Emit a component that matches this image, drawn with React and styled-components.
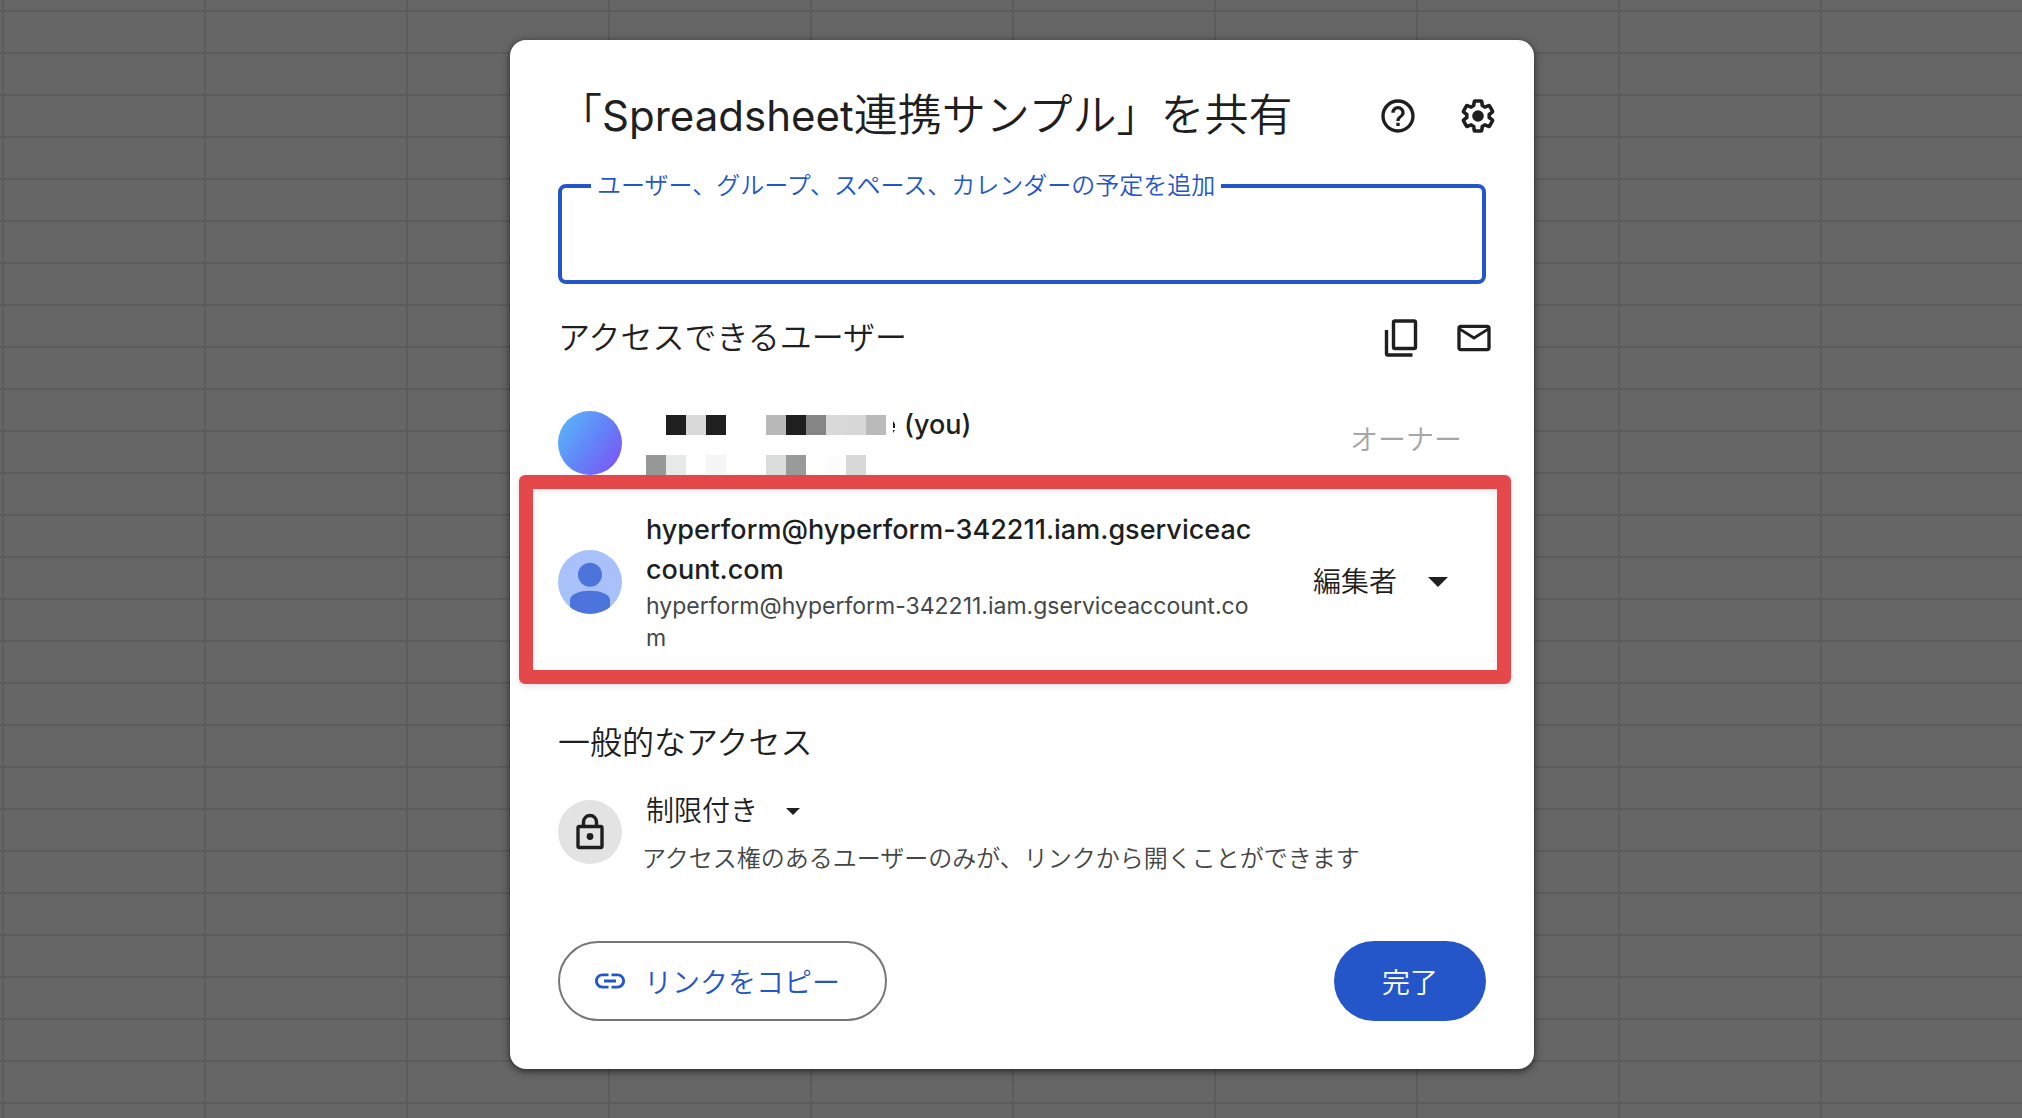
import React from 'react';
import styled, { createGlobalStyle } from 'styled-components';
import { MdHelpOutline, MdOutlineEmail, MdLink } from 'react-icons/md';

const blue = '#2456ca';
const ink = '#1f1f1f';
const muted = '#444746';

const GlobalStyle = createGlobalStyle`
  *, *::before, *::after { box-sizing: border-box; }
  body {
    margin: 0;
    color: ${ink};
    font-family: Inter, "Noto Sans CJK JP", sans-serif;
    font-weight: 350;
  }
  h1, h2, p { margin: 0; font-weight: inherit; }
`;

/* Dimmed spreadsheet grid behind the dialog */
const Backdrop = styled.div`
  min-height: 100vh;
  display: flex;
  justify-content: center;
  align-items: flex-start;
  padding: 40px 0 50px 22px;
  background-color: #666;
  background-image:
    linear-gradient(#5c5c5c 2px, transparent 2px),
    linear-gradient(90deg, #5c5c5c 2px, transparent 2px);
  background-size: 100% 42px, 202px 100%;
  background-position: 0 10px, 2px 0;
`;

const Dialog = styled.main`
  width: 100%;
  max-width: 1024px;
  padding: 44px 0 48px;
  border-radius: 16px;
  background: #fff;
  box-shadow: 0 2px 6px rgba(0, 0, 0, 0.5), 0 2px 12px rgba(0, 0, 0, 0.2);
`;

const Header = styled.header`
  display: flex;
  align-items: flex-start;
  justify-content: space-between;
  height: 64px;
  padding: 0 36px 0 48px;
`;

const Title = styled.h1`
  font-size: 44px;
  line-height: 62px;
`;

const Latin = styled.span`
  font-size: 42px;
  font-weight: 400;
`;

const Actions = styled.div`
  display: flex;
  align-self: center;
  gap: ${(p) => p.$gap}px;
`;

const IconButton = styled.button`
  display: flex;
  padding: 0;
  border: 0;
  background: none;
  color: ${ink};
  cursor: pointer;

  svg { width: 40px; height: 40px; }
`;

const Field = styled.fieldset`
  margin: 23px 48px 0;
  padding: 0;
  border: 4px solid ${blue};
  border-radius: 8px;
`;

const Legend = styled.legend`
  margin-left: 29px;
  padding: 0 6px;
  color: ${blue};
  font-size: 24px;
  line-height: 30px;
`;

const TextInput = styled.input`
  display: block;
  width: 100%;
  height: 79px;
  padding: 0 28px;
  border: 0;
  outline: 0;
  background: none;
  color: ${ink};
  font: inherit;
  font-size: 28px;
`;

const SectionHeader = styled.div`
  display: flex;
  align-items: center;
  justify-content: space-between;
  margin-top: ${(p) => p.$top}px;
  padding: 0 40px 0 48px;
`;

const SectionTitle = styled.h2`
  font-size: 32px;
  line-height: 40px;
`;

const UserRow = styled.div`
  display: flex;
  align-items: flex-end;
  gap: 24px;
  margin-top: 47px;
  padding: 0 72px 0 48px;
`;

const HighlightedRow = styled.div`
  display: flex;
  align-items: center;
  gap: 24px;
  margin: 0 23px 0 9px;
  padding: 21px 49px 16px 25px;
  border: 14px solid #e4484a;
  border-radius: 6px;
  box-shadow: 0 2px 6px rgba(0, 0, 0, 0.12), inset 0 2px 6px rgba(0, 0, 0, 0.1);
`;

const Avatar = styled.div`
  flex: none;
  display: flex;
  align-items: center;
  justify-content: center;
  width: 64px;
  height: 64px;
  border-radius: 50%;
  overflow: hidden;
  background: ${(p) => p.$fill};
`;

const Identity = styled.div`
  flex: 0 1 612px;
  min-width: 0;
  word-break: break-all;
`;

const Name = styled.p`
  display: flex;
  align-items: center;
  font-size: 27px;
  font-weight: 500;
  line-height: 40px;
`;

const Email = styled.p`
  color: ${muted};
  font-size: 23px;
  font-weight: 400;
  line-height: 32px;
`;

const Mosaic = styled.span`
  display: flex;
  margin-top: ${(p) => p.$top || 0}px;
`;

const Tile = styled.span`
  width: 20px;
  height: 20px;
  background: ${(p) => p.$tone};
`;

const Remnant = styled.svg`
  margin: 0 8px 0 7px;
`;

const Owner = styled.p`
  align-self: center;
  margin-left: auto;
  color: #a6a6a6;
  font-size: 28px;
  line-height: 40px;
`;

const SelectBox = styled.div`
  display: inline-grid;
  align-items: center;
  margin-left: ${(p) => (p.$end ? 'auto' : '4px')};

  select, svg { grid-area: 1 / 1; }
  svg { justify-self: end; pointer-events: none; }
`;

const Select = styled.select`
  appearance: none;
  height: 40px;
  padding: 0 ${(p) => p.$gap}px 0 0;
  border: 0;
  background: none;
  color: ${ink};
  font: inherit;
  font-size: 28px;
  line-height: 40px;
  cursor: pointer;
`;

const GeneralRow = styled.div`
  display: flex;
  align-items: center;
  gap: 20px;
  margin-top: 28px;
  padding: 0 48px;
`;

const GeneralText = styled.div`
  display: flex;
  flex-direction: column;
  align-items: flex-start;
  gap: 14px;
`;

const Description = styled.p`
  color: ${muted};
  font-size: 24px;
  line-height: 28px;
`;

const Footer = styled.footer`
  display: flex;
  justify-content: space-between;
  margin-top: 68px;
  padding: 0 48px;
`;

const PillButton = styled.button`
  display: flex;
  align-items: center;
  gap: 16px;
  height: 80px;
  padding: ${(p) => (p.$primary ? '0 48px' : '0 45px 0 32px')};
  border: ${(p) => (p.$primary ? '0' : '2px solid #747775')};
  border-radius: 40px;
  background: ${(p) => (p.$primary ? blue : '#fff')};
  color: ${(p) => (p.$primary ? '#fff' : blue)};
  font: inherit;
  font-size: 28px;
  cursor: pointer;

  svg { width: 36px; height: 36px; }
`;

const GearIcon = () => (
  <svg viewBox="0 0 24 24" aria-hidden="true">
    <g transform="translate(1.2 1.2) scale(.9)">
      <path
        fill="none"
        stroke="currentColor"
        strokeWidth="2.4"
        strokeLinejoin="round"
        d="M19.43 12.98c.04-.32.07-.64.07-.98 0-.34-.03-.66-.07-.98l2.11-1.65c.19-.15.24-.42.12-.64l-2-3.46a.5.5 0 0 0-.61-.22l-2.49 1c-.52-.4-1.08-.73-1.69-.98l-.38-2.65A.488.488 0 0 0 14 2h-4c-.25 0-.46.18-.49.42l-.38 2.65c-.61.25-1.17.59-1.69.98l-2.49-1a.5.5 0 0 0-.61.22l-2 3.46c-.13.22-.07.49.12.64l2.11 1.65c-.04.32-.07.65-.07.98 0 .33.03.66.07.98l-2.11 1.65c-.19.15-.24.42-.12.64l2 3.46a.5.5 0 0 0 .61.22l2.49-1c.52.4 1.08.73 1.69.98l.38 2.65c.03.24.24.42.49.42h4c.25 0 .46-.18.49-.42l.38-2.65c.61-.25 1.17-.59 1.69-.98l2.49 1a.5.5 0 0 0 .61-.22l2-3.46c.12-.22.07-.49-.12-.64z"
      />
    </g>
    <circle cx="12" cy="12" r="3.5" fill="currentColor" />
  </svg>
);

const CopyIcon = () => (
  <svg viewBox="0 0 40 40" fill="none" stroke="currentColor" strokeWidth="3.4" aria-hidden="true">
    <rect x="12.5" y="3" width="22" height="27.5" rx="1.5" />
    <path d="M5.5 12v23.5q0 1.5 1.5 1.5h24.5" />
  </svg>
);

const LockIcon = () => (
  <svg width="40" height="40" viewBox="0 0 40 40" fill="none" stroke={ink} strokeWidth="3.4" aria-hidden="true">
    <rect x="8" y="14.5" width="24" height="21" rx="1.5" />
    <path d="M13.5 14.5V10a6.5 6.5 0 0 1 13 0v4.5" />
    <circle cx="20" cy="24.5" r="3.4" fill={ink} stroke="none" />
  </svg>
);

const PersonIcon = () => (
  <svg width="64" height="64" viewBox="0 0 64 64" fill="#4d74da" aria-hidden="true">
    <circle cx="32" cy="24.7" r="12" />
    <path d="M12 64V50c0-6 10-9.3 20-9.3S52 44 52 50v14z" />
  </svg>
);

const Arrow = ({ width }) => (
  <svg width={width} height={width / 2} viewBox="0 0 20 10" fill={ink} aria-hidden="true">
    <path d="M0 0h20L10 10z" />
  </svg>
);

const nameTiles = ['', '#1f1f1f', '#d9d9d9', '#1f1f1f', '', '', '#b9b9b9', '#1f1f1f', '#858585', '#d9d9d9', '#d7d7d7', '#bababa'];
const emailTiles = ['#979998', '#e7e9e8', '', '#f5f5f5', '', '', '#dbdddc', '#999b9a', '', '#fcfcfc', '#d8d8d8'];

const Tiles = ({ tones, top }) => (
  <Mosaic $top={top} aria-hidden="true">
    {tones.map((tone, i) => <Tile key={i} $tone={tone || 'transparent'} />)}
  </Mosaic>
);

/* Specks left over beside the redacted name */
const Specks = () => (
  <Remnant width="3" height="20" viewBox="0 0 3 20" fill={ink} aria-hidden="true">
    <path d="M0 6l2 3v4H0zM0 15l2 0-2 3z" />
  </Remnant>
);

export default function App() {
  return (
    <>
      <GlobalStyle />
      <Backdrop>
        <Dialog role="dialog" aria-labelledby="share-title">
          <Header>
            <Title id="share-title">「<Latin>Spreadsheet</Latin>連携サンプル」を共有</Title>
            <Actions $gap={40}>
              <IconButton type="button" aria-label="ヘルプ"><MdHelpOutline /></IconButton>
              <IconButton type="button" aria-label="設定"><GearIcon /></IconButton>
            </Actions>
          </Header>

          <Field>
            <Legend><label htmlFor="people">ユーザー、グループ、スペース、カレンダーの予定を追加</label></Legend>
            <TextInput id="people" type="text" />
          </Field>

          <SectionHeader $top={34}>
            <SectionTitle>アクセスできるユーザー</SectionTitle>
            <Actions $gap={33}>
              <IconButton type="button" aria-label="コピー"><CopyIcon /></IconButton>
              <IconButton type="button" aria-label="メール"><MdOutlineEmail /></IconButton>
            </Actions>
          </SectionHeader>

          <UserRow>
            <Avatar $fill="linear-gradient(125deg, #58b4fa 8%, #6480f8 55%, #7d55f6 92%)" />
            <Identity>
              <Name>
                <Tiles tones={nameTiles} />
                <Specks />
                (you)
              </Name>
              <Tiles tones={emailTiles} top={10} />
            </Identity>
            <Owner>オーナー</Owner>
          </UserRow>

          <HighlightedRow>
            <Avatar $fill="#a8c1fb"><PersonIcon /></Avatar>
            <Identity>
              <Name>hyperform@hyperform-342211.iam.gserviceaccount.com</Name>
              <Email>hyperform@hyperform-342211.iam.gserviceaccount.com</Email>
            </Identity>
            <SelectBox $end>
              <Select $gap={50} aria-label="権限" defaultValue="editor">
                <option value="editor">編集者</option>
              </Select>
              <Arrow width={20} />
            </SelectBox>
          </HighlightedRow>

          <SectionHeader $top={39}>
            <SectionTitle>一般的なアクセス</SectionTitle>
          </SectionHeader>

          <GeneralRow>
            <Avatar $fill="#e3e3e3"><LockIcon /></Avatar>
            <GeneralText>
              <SelectBox>
                <Select $gap={41} aria-label="一般的なアクセス" defaultValue="restricted">
                  <option value="restricted">制限付き</option>
                </Select>
                <Arrow width={14} />
              </SelectBox>
              <Description>アクセス権のあるユーザーのみが、リンクから開くことができます</Description>
            </GeneralText>
          </GeneralRow>

          <Footer>
            <PillButton type="button"><MdLink />リンクをコピー</PillButton>
            <PillButton type="button" $primary>完了</PillButton>
          </Footer>
        </Dialog>
      </Backdrop>
    </>
  );
}
